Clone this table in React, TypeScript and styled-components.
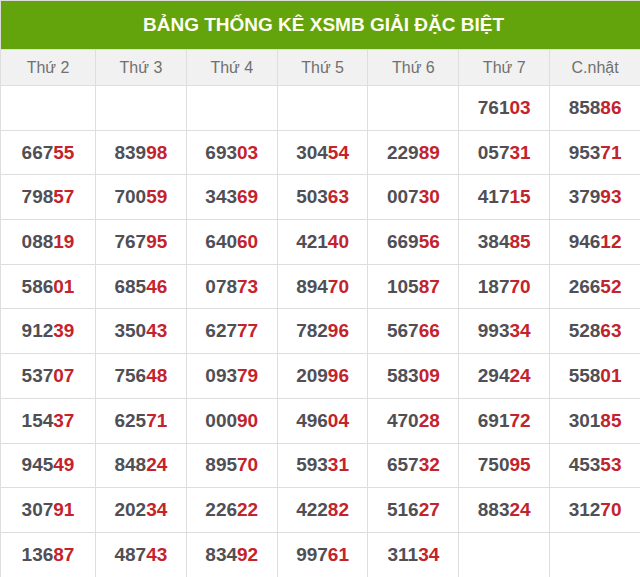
import React from 'react'
import styled, { createGlobalStyle } from 'styled-components'

const GlobalStyle = createGlobalStyle`
  body {
    margin: 0;
    background: #fff;
    font-family: "Liberation Sans", Arial, sans-serif;
  }
`

const Table = styled.table`
  width: 641px;
  border-collapse: collapse;
  table-layout: fixed;
  font-family: "Liberation Sans", Arial, sans-serif;
`

const Column = styled.col<{ $wide?: boolean }>`
  width: ${(p) => (p.$wide ? '95px' : 'auto')};
`

const TitleCell = styled.th`
  height: 48px;
  padding: 0 0 0 6px;
  background: #63a40c;
  color: #fffef0;
  font-size: 19px;
  font-weight: bold;
  text-align: center;
  border: 1px solid #dcdcdc;
  border-bottom: none;
`

const HeadCell = styled.th`
  height: 35px;
  padding: 0;
  background: #f1f1f1;
  color: #707070;
  font-size: 16px;
  font-weight: normal;
  text-align: center;
  border: 1px solid #dedede;
`

const Cell = styled.td`
  height: 43.7px;
  padding: 0;
  text-align: center;
  border: 1px solid #dedede;
  font-size: 19px;
  font-weight: bold;
  color: #4f4f55;
`

const Tail = styled.span`
  color: #c4232c;
`

const days = ['Thứ 2', 'Thứ 3', 'Thứ 4', 'Thứ 5', 'Thứ 6', 'Thứ 7', 'C.nhật']

const rows: string[][] = [
  ['', '', '', '', '', '76103', '85886'],
  ['66755', '83998', '69303', '30454', '22989', '05731', '95371'],
  ['79857', '70059', '34369', '50363', '00730', '41715', '37993'],
  ['08819', '76795', '64060', '42140', '66956', '38485', '94612'],
  ['58601', '68546', '07873', '89470', '10587', '18770', '26652'],
  ['91239', '35043', '62777', '78296', '56766', '99334', '52863'],
  ['53707', '75648', '09379', '20996', '58309', '29424', '55801'],
  ['15437', '62571', '00090', '49604', '47028', '69172', '30185'],
  ['94549', '84824', '89570', '59331', '65732', '75095', '45353'],
  ['30791', '20234', '22622', '42282', '51627', '88324', '31270'],
  ['13687', '48743', '83492', '99761', '31134', '', ''],
]

const Prize = ({ value }: { value: string }) => {
  if (!value) return null
  return <>
    {value.slice(0, 3)}<Tail>{value.slice(3)}</Tail>
  </>
}

const App = () => {
  return <>
    <GlobalStyle />
    <Table>
      <colgroup>
        {days.map((d, i) => (
          <Column key={d} $wide={i === 0} />
        ))}
      </colgroup>
      <thead>
        <tr>
          <TitleCell colSpan={7}>BẢNG THỐNG KÊ XSMB GIẢI ĐẶC BIỆT</TitleCell>
        </tr>
        <tr>
          {days.map((d) => (
            <HeadCell key={d}>{d}</HeadCell>
          ))}
        </tr>
      </thead>
      <tbody>
        {rows.map((row, i) => (
          <tr key={i}>
            {row.map((v, j) => (
              <Cell key={j}><Prize value={v} /></Cell>
            ))}
          </tr>
        ))}
      </tbody>
    </Table>
  </>
}

export default App
